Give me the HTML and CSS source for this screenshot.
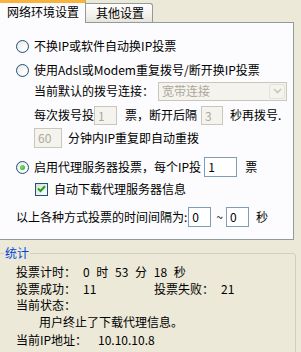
FILE: index.html
```html
<!DOCTYPE html>
<html>
<head>
<meta charset="utf-8">
<link rel="stylesheet" href="styles.css">
</head>
<body>
<div class="tabs">
  <div class="tab active">网络环境设置</div>
  <div class="tab other">其他设置</div>
</div>
<div class="panel">
  <div class="row r1"><span class="radio"></span><span class="lbl">不换IP或软件自动换IP投票</span></div>
  <div class="row r2"><span class="radio"></span><span class="lbl">使用Adsl或Modem重复拨号/断开换IP投票</span></div>
  <div class="row r3 indent"><span>当前默认的拨号连接：</span>
    <div class="select"><span class="sel-text">宽带连接</span><span class="sel-btn"><svg width="9" height="6" viewBox="0 0 9 6"><path d="M1 1 L4.5 4.5 L8 1" fill="none" stroke="#c9c7ba" stroke-width="1.6"/></svg></span></div>
  </div>
  <div class="row r4 indent"><span>每次拨号投</span><span class="input dis w23">1</span><span class="t1">票，断开后隔</span><span class="input dis w22">3</span><span class="t2">秒再拨号.</span></div>
  <div class="row r5 indent"><span class="input dis w28">60</span><span class="t3">分钟内IP重复即自动重拨</span></div>
  <div class="row r6"><span class="radio on"></span><span class="lbl">启用代理服务器投票，每个IP投</span><span class="input w33">1</span><span class="t4">票</span></div>
  <div class="row r7 indent2"><span class="check"><svg width="9" height="8" viewBox="0 0 9 8"><path d="M1 3.5 L3.5 6 L8 1.2" fill="none" stroke="#21a121" stroke-width="2"/></svg></span><span class="lbl2">自动下载代理服务器信息</span></div>
  <div class="row r8"><span>以上各种方式投票的时间间隔为:</span><span class="input w23 i0">0</span><span class="tilde">~</span><span class="input w23">0</span><span class="t5">秒</span></div>
</div>
<fieldset class="stats">
  <legend>统计</legend>
  <div class="srow s1"><span class="k">投票计时：</span><span class="v time">0 时 53 分 18 秒</span></div>
  <div class="srow s2"><span class="k">投票成功：</span><span class="v w71">11</span><span class="k">投票失败：</span><span class="v">21</span></div>
  <div class="srow s3"><span class="k">当前状态：</span></div>
  <div class="srow s4 msg">用户终止了下载代理信息。</div>
  <div class="srow s5"><span class="k ip">当前IP地址：</span><span class="v">10.10.10.8</span></div>
</fieldset>
</body>
</html>
```
FILE: styles.css
```css
* { box-sizing: border-box; }
html, body { margin: 0; padding: 0; }
body {
  width: 301px;
  height: 352px;
  overflow: hidden;
  background: #ece9d8;
  font-family: "Noto Sans CJK SC", "Liberation Sans", sans-serif;
  font-size: 12px;
  line-height: 16px;
  color: #000;
}
.tabs {
  display: flex;
  align-items: flex-end;
  height: 22px;
}
.tab {
  white-space: nowrap;
}
.tab.active {
  width: 86px;
  height: 23px;
  background: #fcfcfe;
  border-top: 3px solid #f7b33d;
  border-right: 1px solid #919b9c;
  padding: 1px 0 0 7px;
  position: relative;
  z-index: 1;
  margin-bottom: -1px;
}
.tab.other {
  width: 67px;
  height: 19px;
  background: linear-gradient(#ffffff, #f0efe8 70%, #e6e4da);
  border: 1px solid #919b9c;
  border-left: none;
  border-bottom: none;
  border-radius: 0 3px 0 0;
  padding: 1px 0 0 10px;
}
.panel {
  width: 294px;
  height: 218px;
  background: #fcfcfe;
  border: 1px solid #919b9c;
  border-left: none;
  padding: 13px 0 0 16px;
}
.row {
  display: flex;
  align-items: center;
  height: 20px;
  white-space: nowrap;
}
.r2 { margin-top: 4px; }
.r3 { margin-top: 1px; }
.r4 { margin-top: 4px; }
.r5 { margin-top: 3px; }
.r6 { margin-top: 9px; }
.r7 { margin-top: 4px; height: 16px; }
.r8 { margin-top: 10px; }
.indent { padding-left: 18px; }
.indent2 { padding-left: 19px; }
.radio {
  width: 13px;
  height: 13px;
  border: 1px solid #1c5180;
  border-radius: 50%;
  background: radial-gradient(circle at 65% 65%, #ffffff 0, #f2f1ea 60%, #dcd9ce 100%);
  flex: none;
  position: relative;
}
.radio.on::after {
  content: "";
  position: absolute;
  left: 3px;
  top: 3px;
  width: 5px;
  height: 5px;
  border-radius: 50%;
  background: radial-gradient(circle at 40% 40%, #7fe07f, #21a121);
}
.lbl { margin-left: 5px; }
.lbl2 { margin-left: 6px; }
.check {
  width: 13px;
  height: 13px;
  border: 1px solid #1c5180;
  background: linear-gradient(135deg, #dcdcd5, #ffffff);
  display: flex;
  align-items: center;
  justify-content: center;
  flex: none;
}
.select {
  margin-left: 4px;
  width: 129px;
  height: 19px;
  border: 1px solid #c9c7ba;
  background: #f4f3ee;
  display: flex;
  align-items: center;
  justify-content: space-between;
  padding: 1px 1px 1px 3px;
}
.sel-text { color: #aca899; }
.sel-btn {
  width: 16px;
  height: 15px;
  border: 1px solid #e4e2da;
  border-radius: 2px;
  background: #f4f3ee;
  display: flex;
  align-items: center;
  justify-content: center;
}
.input {
  height: 20px;
  border: 1px solid #7f9db9;
  background: #fff;
  padding: 1px 0 0 3px;
  flex: none;
  line-height: 16px;
}
.input.dis {
  border-color: #c9c7ba;
  background: #f4f3ee;
  color: #aca899;
}
.w22 { width: 22px; }
.w23 { width: 23px; }
.w28 { width: 28px; }
.w33 { width: 33px; }
.r4 .input { height: 19px; }
.t1 { margin-left: 8px; margin-right: 4px; }
.t2 { margin-left: 7px; }
.t3 { margin-left: 6px; }
.input.w33 { margin-left: 3px; }
.t4 { margin-left: 8px; }
.i0 { margin-left: 1px; }
.tilde { margin: 0 3px 0 5px; }
.t5 { margin-left: 7px; }
.stats {
  margin: 5px 5px 0 -2px;
  padding: 0 0 0 17px;
  border: 1px solid #d0d0bf;
  border-radius: 3px;
  height: 120px;
  min-width: 0;
}
.stats legend {
  color: #0046d5;
  padding: 0 1px;
  margin-left: -12px;
  line-height: 16px;
}
.srow {
  display: flex;
  height: 17px;
  align-items: center;
  white-space: nowrap;
}
.s1 { margin-top: 2px; }
.s2 { margin-top: 0px; }
.s3 { margin-top: -1px; }
.s4 { margin-top: 0px; padding-left: 23px; }
.s5 { margin-top: 1px; }
.k { width: 67px; }
.k.ip { width: 82px; }
.v.time { word-spacing: 4px; }
.v.w71 { width: 71px; }
```
